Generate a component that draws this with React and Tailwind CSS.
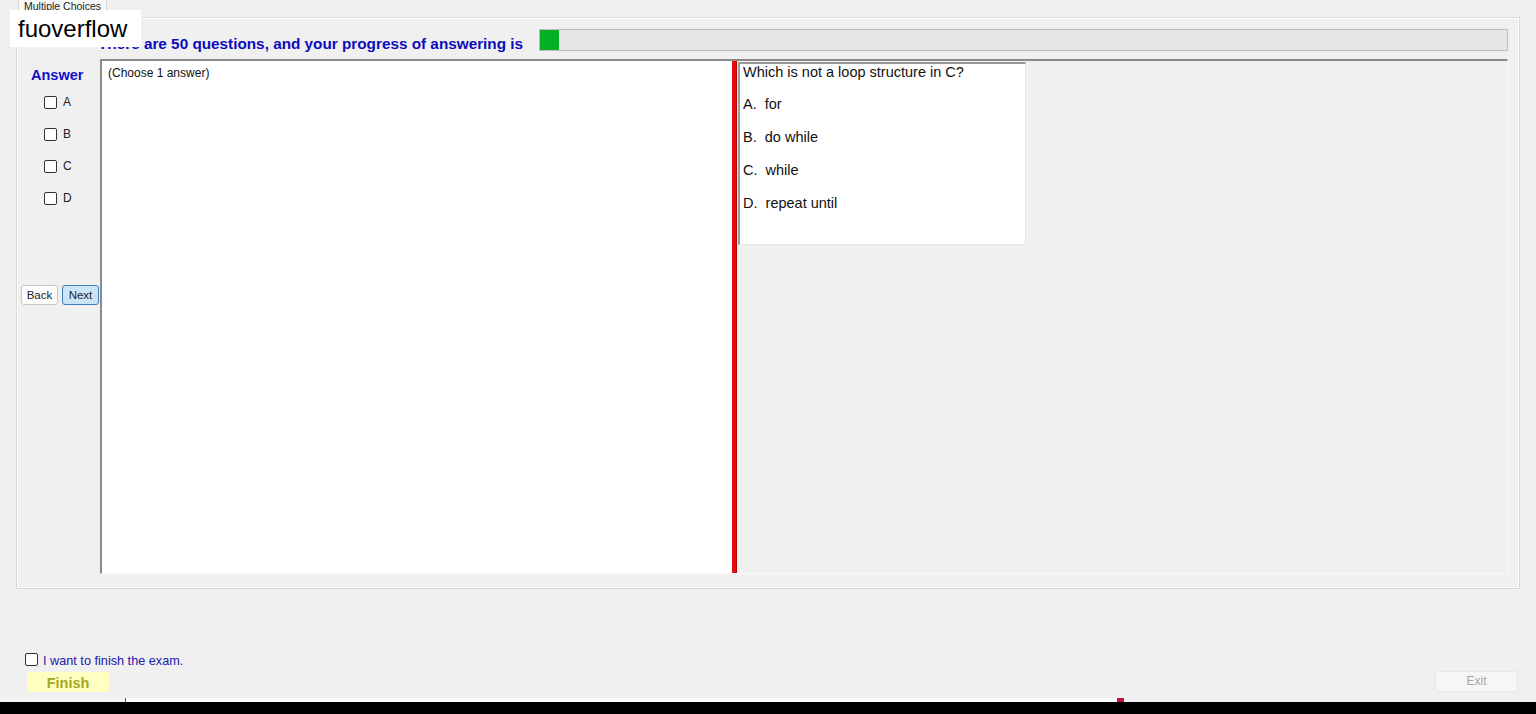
import React from "react";

function Box({ className = "" }) {
  return <span className={"inline-block w-[13px] h-[13px] border border-[#333] rounded-[2px] bg-white " + className} />;
}

export default function App() {
  const letters = ["A", "B", "C", "D"];
  const options = ["A.  for", "B.  do while", "C.  while", "D.  repeat until"];
  return (
    <div className="relative w-[1536px] h-[714px] overflow-hidden bg-[#f0f0f0] font-['Liberation_Sans',Arial,sans-serif] flex flex-col text-[#111]">
      {/* tab header */}
      <div className="h-[17px] flex pl-[18px] shrink-0">
        <div className="h-[13px] px-[5px] border border-t-0 border-[#d6d6d6] bg-[#f8f8f8] text-[10.5px] leading-[12px] text-[#222]">
          Multiple Choices
        </div>
      </div>

      {/* tab panel */}
      <div className="mx-[16px] h-[572px] shrink-0 border border-[#dadada] shadow-[inset_1px_1px_0_#ffffff,inset_-1px_-1px_0_#ffffff] flex flex-col">
        {/* header row */}
        <div className="mt-[11px] h-[22px] flex items-center pl-[81px] mr-[11px]">
          <span className="text-[15.3px] font-bold text-[#0c0cbd] whitespace-nowrap leading-[16px] pt-[8px]">
            There are 50 questions, and your progress of answering is
          </span>
          <div className="ml-[16px] flex-1 h-[22px] bg-[#e6e6e6] border border-[#bcbcbc] flex">
            <div className="w-[19px] h-full bg-[#06b025]" />
          </div>
        </div>

        {/* content row */}
        <div className="mt-[8px] h-[515px] flex">
          {/* left column */}
          <div className="w-[83px] flex flex-col">
            <div className="pt-[8px] pl-[14px] h-[24px] text-[14.5px] leading-[16px] font-bold text-[#1010c8]">Answer</div>
            <div className="mt-[3px] flex flex-col">
              {letters.map((l) => (
                <div key={l} className="h-[32px] flex items-center pl-[27px] gap-[6px]">
                  <Box />
                  <span className="text-[12px] text-[#222]">{l}</span>
                </div>
              ))}
            </div>
            <div className="mt-[71px] pl-[4px] flex gap-[4px]">
              <div className="w-[37px] h-[20px] border border-[#c8c8c8] bg-[#fdfdfd] rounded-[3px] text-[11.5px] leading-[18px] text-center text-[#222]">Back</div>
              <div className="w-[37px] h-[20px] border border-[#3d7fb6] bg-[#cce4f7] rounded-[3px] text-[11.5px] leading-[18px] text-center text-[#222]">Next</div>
            </div>
          </div>

          {/* main split */}
          <div className="flex-1 mr-[11px] flex border-t-2 border-l-2 border-t-[#8a8a8a] border-l-[#8a8a8a] border-b border-r border-b-[#fafafa] border-r-[#fafafa]">
            <div className="w-[630px] bg-white pt-[5px] pl-[6px] text-[12px] leading-[14px] text-[#111]">(Choose 1 answer)</div>
            <div className="w-[5px] bg-[#e40d0d] border-r border-[#b00000]" />
            <div className="flex-1 pt-[1px] pl-[1px]">
              <div className="w-[288px] h-[183px] bg-white border-t-2 border-l-2 border-t-[#9a9a9a] border-l-[#9a9a9a] border-b border-r border-b-[#e6e6e6] border-r-[#e6e6e6] pl-[3px] text-[14.5px] leading-[16px] text-[#111]">
                <div>Which is not a loop structure in C?</div>
                <div className="mt-[16px] flex flex-col gap-[17px]">
                  {options.map((o) => (
                    <div key={o} className="whitespace-pre">{o}</div>
                  ))}
                </div>
              </div>
            </div>
          </div>
        </div>
      </div>

      {/* bottom area */}
      <div className="mt-[64px] pl-[25px] flex items-center gap-[5px] h-[13px]">
        <Box />
        <span className="text-[12.7px] leading-[13px] pt-[3px] text-[#2020a8]">I want to finish the exam.</span>
      </div>
      <div className="mt-[6px] flex justify-between items-start pl-[27px] pr-[18px]">
        <div className="w-[82px] h-[20px] bg-[#ffffc0] rounded-[3px] text-center text-[14.5px] leading-[22px] font-bold text-[#a6a622]">Finish</div>
        <div className="-mt-[1px] w-[83px] h-[21px] bg-[#f6f6f6] border border-[#e8e8e8] rounded-[2px] text-center text-[12px] leading-[19px] text-[#a6a6a6]">Exit</div>
      </div>

      {/* bottom strip */}
      <div className="mt-auto h-[5px] flex items-end">
        <div className="w-[125px] h-[4px] bg-[#f4f4f4]" />
        <div className="w-[1px] h-[4px] bg-[#555]" />
        <div className="w-[991px] h-[4px] bg-white" />
        <div className="w-[7px] h-[4px] bg-[#c0143c]" />
      </div>
      <div className="h-[12px] bg-black shrink-0" />

      {/* watermark overlay */}
      <div className="absolute left-[10px] top-[10px] w-[131px] h-[37px] bg-white pl-[8px] text-[24px] leading-[37px] text-black">fuoverflow</div>
    </div>
  );
}
